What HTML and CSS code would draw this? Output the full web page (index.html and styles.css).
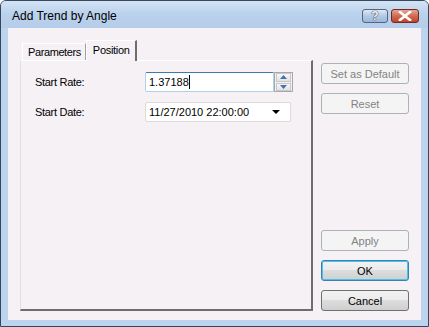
FILE: index.html
```html
<!DOCTYPE html>
<html lang="en">
<head>
    <meta charset="UTF-8">
    <title>Add Trend by Angle</title>
    <link rel="stylesheet" href="styles.css">
</head>
<body>
    <div class="window">
        <div class="titlebar">
            <span class="title">Add Trend by Angle</span>
            <div class="caption-buttons">
                <div class="cap-btn help">?</div>
                <div class="cap-btn close">
                    <svg width="14" height="10" viewBox="0 0 14 10">
                        <path d="M2 1 L12 9 M12 1 L2 9" stroke="#fff" stroke-width="2.6" stroke-linecap="square"/>
                    </svg>
                </div>
            </div>
        </div>
        <div class="client">
            <div class="tabs-area">
                <div class="tab-strip">
                    <div class="tab">Parameters</div>
                    <div class="tab active">Position</div>
                </div>
                <div class="tab-panel">
                    <div class="field-row">
                        <label>Start Rate:</label>
                        <div class="spin-box">
                            <div class="text-input focused">1.37188<span class="caret"></span></div>
                            <div class="spinner">
                                <div class="spin-btn">
                                    <svg width="7" height="4" viewBox="0 0 7 4"><path d="M0 4 L3.5 0 L7 4Z" fill="#4a6fb0"/></svg>
                                </div>
                                <div class="spin-btn">
                                    <svg width="7" height="4" viewBox="0 0 7 4"><path d="M0 0 L3.5 4 L7 0Z" fill="#4a6fb0"/></svg>
                                </div>
                            </div>
                        </div>
                    </div>
                    <div class="field-row">
                        <label>Start Date:</label>
                        <div class="combo">
                            <span>11/27/2010 22:00:00</span>
                            <svg width="8" height="4" viewBox="0 0 8 4"><path d="M0 0 L8 0 L4 4Z" fill="#000"/></svg>
                        </div>
                    </div>
                </div>
            </div>
            <div class="side-buttons">
                <button class="btn" disabled>Set as Default</button>
                <button class="btn" disabled>Reset</button>
                <div class="spacer"></div>
                <button class="btn" disabled>Apply</button>
                <button class="btn default">OK</button>
                <button class="btn">Cancel</button>
            </div>
        </div>
    </div>
</body>
</html>
```

FILE: styles.css
```css
body {
    margin: 0;
    background: #ffffff;
    font-family: "Liberation Sans", Arial, sans-serif;
    font-size: 11px;
    color: #000;
}
.window {
    width: 427px;
    height: 325px;
    border: 1px solid #34475c;
    border-radius: 6px 6px 0 0;
    background: #bdd4ee;
    display: flex;
    flex-direction: column;
    overflow: hidden;
}
.titlebar {
    height: 27px;
    display: flex;
    align-items: center;
    justify-content: space-between;
    padding: 0 9px 0 11px;
    background: linear-gradient(#d4e3f4, #b9d1ec 50%, #b5cdea);
}
.title {
    font-size: 12px;
    color: #000;
    padding-top: 2px;
}
.caption-buttons {
    display: flex;
    gap: 3px;
    margin-top: 2px;
}
.cap-btn {
    height: 12px;
    border: 1px solid #52667d;
    border-radius: 3px;
    display: flex;
    align-items: center;
    justify-content: center;
    color: #fff;
    font-weight: bold;
    font-size: 12px;
}
.cap-btn.help {
    width: 24px;
    background: linear-gradient(#dfe9f6, #b3c9e4 50%, #9ab7dc);
    color: #f4f6fa;
    text-shadow: 0 0 1px #223, 0 0 1px #223;
}
.cap-btn.close {
    width: 26px;
    border-color: #6b2d24;
    background: linear-gradient(#e8a593, #d06a52 50%, #c2432a);
}
.client {
    flex: 1;
    margin: 0 7px 6px 7px;
    background: #f5f1f5;
    display: flex;
    padding: 12px 12px 9px 12px;
    gap: 8px;
}
.tabs-area {
    width: 293px;
    display: flex;
    flex-direction: column;
}
.tab-strip {
    display: flex;
    align-items: flex-end;
    height: 20px;
    padding-left: 2px;
    position: relative;
    z-index: 1;
}
.tab {
    height: 16px;
    padding: 0 4px 0 5px;
    line-height: 17px;
    letter-spacing: -0.4px;
    border: 1px solid #fff;
    border-bottom: none;
    border-right: 1px solid #a0a0a0;
    background: #f5f1f5;
}
.tab.active {
    height: 20px;
    margin-bottom: -1px;
    line-height: 18px;
    padding: 0 5px 0 6px;
    letter-spacing: -0.3px;
    border-right: 2px solid #6d6d6d;
    background: #f5f1f5;
}
.tab-panel {
    flex: 1;
    border-top: 1px solid #fff;
    border-left: 1px solid #e2dee2;
    border-right: 2px solid #6d6d6d;
    border-bottom: 2px solid #6d6d6d;
    padding: 11px 0 0 14px;
    display: flex;
    flex-direction: column;
    gap: 10px;
}
.field-row {
    display: flex;
    align-items: center;
    height: 20px;
}
.field-row label {
    width: 110px;
    letter-spacing: -0.3px;
}
.spin-box {
    display: flex;
    align-items: center;
}
.text-input {
    width: 124px;
    height: 18px;
    line-height: 18px;
    padding-left: 3px;
    background: #fff;
    border: 1px solid #b5cfe7;
    border-top-color: #3d7bad;
    border-radius: 2px 0 0 2px;
    display: flex;
    align-items: center;
}
.caret {
    width: 1px;
    height: 14px;
    background: #000;
}
.spinner {
    width: 15px;
    height: 18px;
    border: 1px solid #a8a8a8;
    display: flex;
    flex-direction: column;
    gap: 1px;
    padding: 0 1px;
    background: #f0f0f0;
}
.spin-btn {
    flex: 1;
    background: linear-gradient(#f7f7f7, #e2e2e2);
    border: 1px solid #c8c8c8;
    display: flex;
    align-items: center;
    justify-content: center;
}
.combo {
    height: 18px;
    padding-left: 3px;
    background: #fff;
    border: 1px solid #dbdbdb;
    border-radius: 2px;
    display: flex;
    align-items: center;
    justify-content: space-between;
    padding-right: 10px;
    width: 131px;
}
.side-buttons {
    width: 88px;
    display: flex;
    flex-direction: column;
    padding-top: 23px;
    gap: 10px;
}
.spacer {
    flex: 1;
}
.btn {
    height: 21px;
    margin: 0;
    padding: 0;
    font-family: "Liberation Sans", Arial, sans-serif;
    font-size: 11px;
    color: #000;
    border: 1px solid #707070;
    border-radius: 3px;
    background: linear-gradient(#f2f2f2, #ebebeb 50%, #dddddd 50%, #cfcfcf);
}
.btn:disabled {
    color: #838383;
    border-color: #adb2b5;
    background: #f4f4f4;
}
.btn.default {
    border-color: #3c7fb1;
    box-shadow: inset 0 0 0 1px #48c4f0;
}
.side-buttons .btn + .btn {
    margin-top: -1px;
}
```
